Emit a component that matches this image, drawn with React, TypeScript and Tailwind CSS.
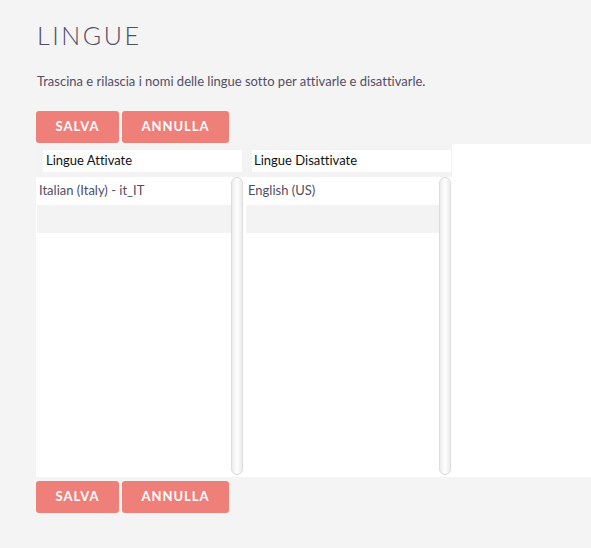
import React from 'react';

const font = { fontFamily: 'Lato, "Open Sans", sans-serif' };

const Buttons: React.FC = () => (
  <div className="flex gap-[3px]">
    <button className="w-[83px] h-[32px] rounded-[3px] bg-[#ef8079] text-white text-[13px] font-bold tracking-[1px]">
      SALVA
    </button>
    <button className="w-[107px] h-[32px] rounded-[3px] bg-[#ef8079] text-white text-[13px] font-bold tracking-[1px]">
      ANNULLA
    </button>
  </div>
);

const Scrollbar: React.FC = () => (
  <div className="w-[12px] h-[298px] rounded-full border border-[#dcdcdc] bg-gradient-to-r from-[#ececec] via-white to-[#ececec]" />
);

const LangList: React.FC<{ item: string; width: string }> = ({ item, width }) => (
  <div className={`flex ${width}`}>
    <div className="flex-1 flex flex-col">
      <div className="h-[28px] flex items-center px-[3px] text-[13px] text-[#534d64]">{item}</div>
      <div className="h-[28px] bg-[#f3f3f3] ml-[1px]" />
    </div>
    <Scrollbar />
  </div>
);

export default function App() {
  return (
    <div className="min-h-[548px] bg-[#f4f4f4] pl-[36px] pt-[20px] [font-variant-ligatures:none]" style={font}>
      <h1 className="text-[25px] font-light tracking-[2.6px] text-[#534d64] leading-[30px] ml-[1px]">LINGUE</h1>
      <p className="mt-[22px] text-[13px] text-[#534d64] ml-[1px]">
        Trascina e rilascia i nomi delle lingue sotto per attivarle e disattivarle.
      </p>
      <div className="mt-[19px]">
        <Buttons />
      </div>
      <div className="mt-[1px] bg-white h-[333px]">
        <div className="w-[416px] bg-[#f3f3f3] flex pt-[6px] pb-[5px] pl-[7px] gap-[10px]">
          <div className="w-[199px] h-[22px] bg-white flex items-center pl-[3px] text-[13px] text-[#111]">
            Lingue Attivate
          </div>
          <div className="w-[199px] h-[22px] bg-white flex items-center pl-[2px] text-[13px] text-[#111]">
            Lingue Disattivate
          </div>
        </div>
        <div className="flex gap-[2px]">
          <LangList item="Italian (Italy) - it_IT" width="w-[207px]" />
          <LangList item="English (US)" width="w-[206px]" />
        </div>
      </div>
      <div className="mt-[4px]">
        <Buttons />
      </div>
    </div>
  );
}
